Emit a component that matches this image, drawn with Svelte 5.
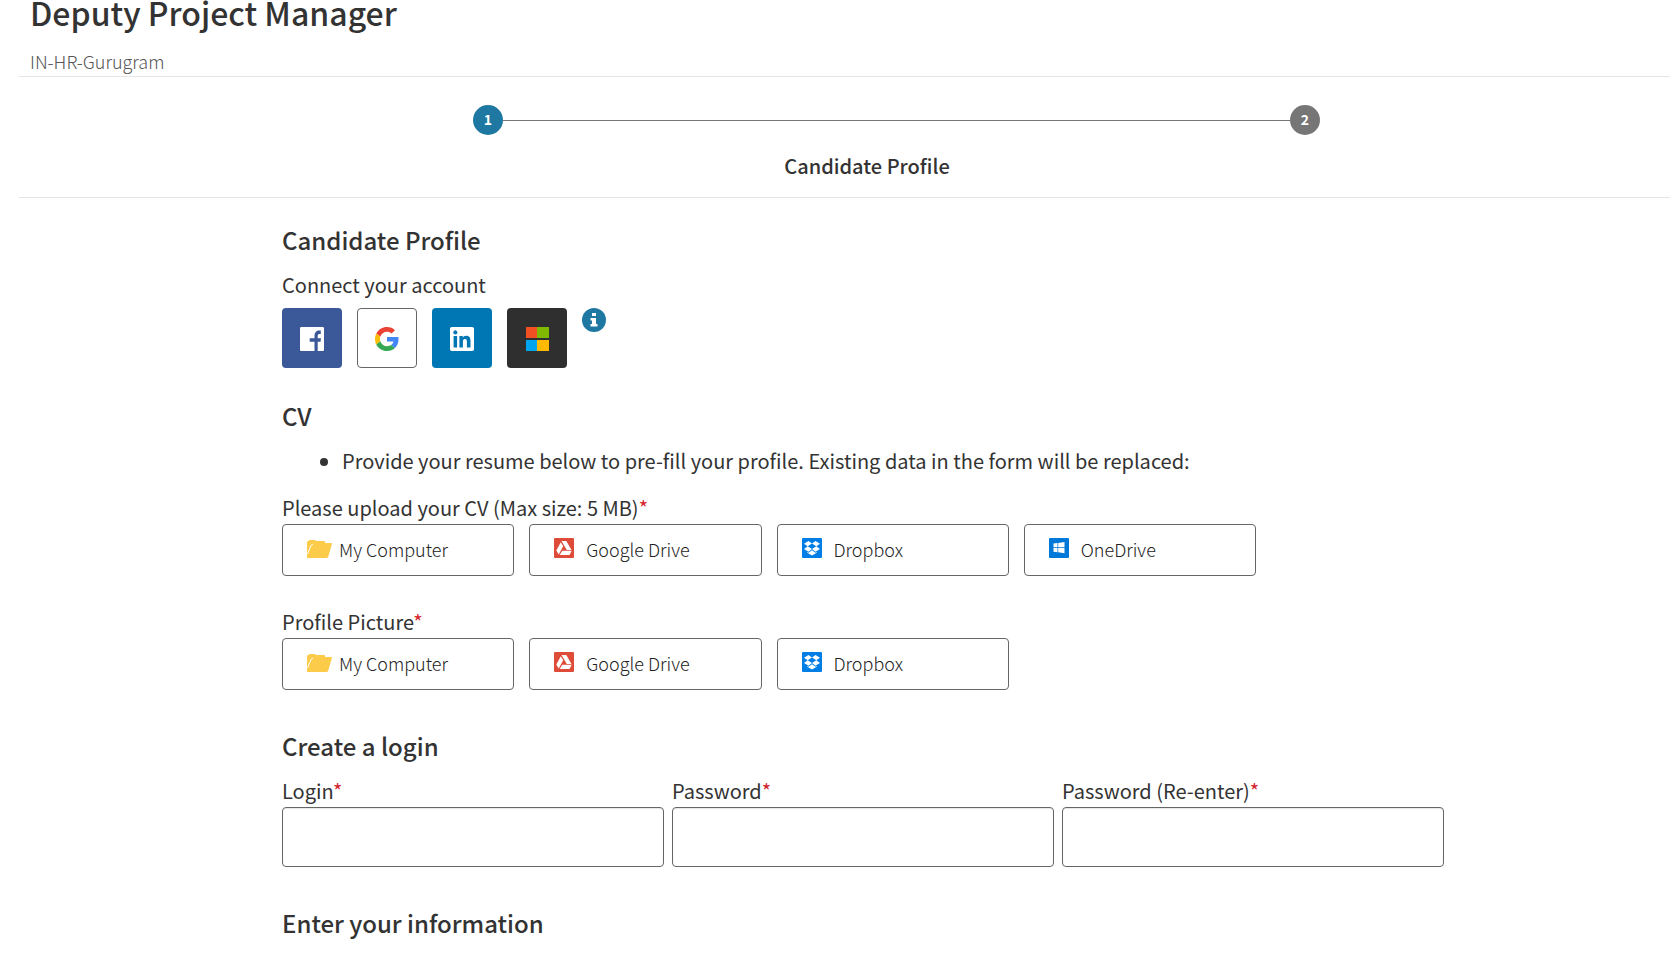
<script>
    const accounts = ["facebook", "google", "linkedin", "microsoft"];

    const uploads = [
        {
            id: "cv",
            label: "Please upload your CV (Max size: 5 MB)",
            sources: ["My Computer", "Google Drive", "Dropbox", "OneDrive"],
        },
        {
            id: "picture",
            label: "Profile Picture",
            sources: ["My Computer", "Google Drive", "Dropbox"],
        },
    ];

    const loginFields = [
        { id: "login", label: "Login", type: "text" },
        { id: "password", label: "Password", type: "password" },
        { id: "password2", label: "Password (Re-enter)", type: "password" },
    ];
</script>

{#snippet accountIcon(name)}
    <svg width="24" height="24" viewBox="0 0 24 24" aria-hidden="true">
        {#if name === "facebook"}
            <path
                fill="#fff"
                d="M22.7 0H1.3C.6 0 0 .6 0 1.3v21.4c0 .7.6 1.3 1.3 1.3h13.2v-9.3H9.7v-3.4h4.8V9.2c0-3.600 1.900-5.600 4.900-5.600h1.400v3.500h-1.300c-1.500 0-1.800.9-1.800 2.100v2.100h3.300l-.5 3.400h-2.800V24h5c.7 0 1.300-.6 1.300-1.300V1.300c0-.7-.6-1.300-1.300-1.300z"
            />
        {:else if name === "google"}
            <path fill="#ea4335" d="M12 4.800c1.800 0 3.400.6 4.600 1.800L20 3.200C17.900 1.200 15.200 0 12 0 7.300 0 3.300 2.700 1.300 6.600l4 3.100C6.200 6.900 8.900 4.800 12 4.800z" />
            <path fill="#4285f4" d="M23.500 12.300c0-.8-.1-1.600-.2-2.300H12v4.600h6.500c-.3 1.500-1.200 2.700-2.400 3.500l3.900 3c2.200-2.100 3.500-5.200 3.500-8.800z" />
            <path fill="#fbbc05" d="M5.300 14.300c-.2-.7-.4-1.500-.4-2.300s.1-1.600.4-2.300l-4-3.100C.5 8.200 0 10.100 0 12s.5 3.800 1.300 5.400z" />
            <path fill="#34a853" d="M12 24c3.200 0 6-1.100 8-2.900l-3.900-3c-1.100.7-2.500 1.200-4.100 1.200-3.100 0-5.800-2.100-6.700-5l-4 3.100C3.300 21.300 7.300 24 12 24z" />
        {:else if name === "linkedin"}
            <path
                fill="#fff"
                d="M22.200 0H1.800C.8 0 0 .8 0 1.700v20.600c0 .9.8 1.700 1.800 1.700h20.400c1 0 1.800-.8 1.800-1.700V1.700C24 .8 23.200 0 22.200 0zM7.100 20.500H3.600V9h3.500zM5.300 7.400c-1.100 0-2-.9-2-2s.9-2.100 2-2.100 2.100 1 2.100 2.100-.9 2-2.100 2zm15.200 13.100h-3.600v-5.600c0-1.300 0-3-1.900-3s-2.100 1.400-2.100 2.900v5.700H9.400V9h3.400v1.600c.5-.9 1.600-1.900 3.400-1.900 3.600 0 4.300 2.400 4.300 5.500z"
            />
        {:else}
            <path fill="#f25022" d="M1 0h11v11H1z" />
            <path fill="#7fba00" d="M12 0h12v11H12z" />
            <path fill="#00a4ef" d="M1 13h11v11H1z" />
            <path fill="#ffb900" d="M12 13h12v11H12z" />
        {/if}
    </svg>
{/snippet}

{#snippet sourceIcon(name)}
    <svg width="25" height="20" viewBox="0 0 25 20" aria-hidden="true">
        {#if name === "My Computer"}
            <path
                fill="#fdcb4a"
                d="M0 20V4.500C0 3.600.6 3 1.500 3L2.500 2H8l1 1h8c.7 0 1 .4 1 1v1h6.200c.6 0 .9.4.7 1l-3.600 12.600c-.3 1-.9 1.400-1.800 1.400z"
            />
            <path fill="none" stroke="#fff" d="M.5 16 4 7.500 6 6" />
        {:else if name === "Google Drive"}
            <rect width="20" height="20" rx="1" fill="#de4b39" />
            <path fill="#fff" d="M7.500 3h4.800l5.200 9h-4.700zM6.800 4.200l2.400 4.100L4.700 16.500l-2.400-4.100zM8.200 12.700h9.500L15.500 17H5.700z" />
        {:else if name === "Dropbox"}
            <rect width="20" height="20" rx="1" fill="#007ee5" />
            <path
                fill="#fff"
                d="M6.500 3 10 5.500 5.700 8.300 2 5.800zM13.500 3 18 5.800l-3.700 2.500L10 5.500zM2 11l3.700-2.700L10 11.100l-3.500 2.600zM10 11.100l4.300-2.800L18 11l-4.500 2.700zM10 12.200l3.500 2.500 1.300-.8v.8L10 17.500l-4.800-2.800v-.8l1.300.8z"
            />
        {:else}
            <rect width="20" height="20" rx="1" fill="#0078d7" />
            <path fill="#fff" d="M4.500 5.500 8.500 5v4.200h-4zM9.200 4.900 15.500 4v5.200H9.200zM4.500 10h4v4.200l-4-.5zM9.200 10h6.300v5.200l-6.300-.9z" />
        {/if}
    </svg>
{/snippet}

<header class="job-header">
    <h1>Deputy Project Manager</h1>
    <p>IN-HR-Gurugram</p>
</header>

<nav class="steps" aria-label="Progress">
    <div class="inner">
        <div class="track">
            <span class="step active">1</span>
            <span class="line"></span>
            <span class="step">2</span>
        </div>
        <p class="step-title">Candidate Profile</p>
    </div>
</nav>

<main>
    <form class="inner">
        <section>
            <h2>Candidate Profile</h2>
            <p>Connect your account</p>
            <div class="accounts">
                {#each accounts as account}
                    <button type="button" class="account {account}" aria-label={account}>
                        {@render accountIcon(account)}
                    </button>
                {/each}
                <svg class="info" width="24" height="24" viewBox="0 0 24 24" aria-hidden="true">
                    <circle cx="12" cy="12" r="12" fill="#1f78a1" />
                    <path fill="#fff" d="M10 5h4v3h-4zM8.500 10H14v6h1.500v2.500h-7V16H10v-3.500H8.500z" />
                </svg>
            </div>
        </section>

        <section class="cv">
            <h2>CV</h2>
            <ul>
                <li>Provide your resume below to pre-fill your profile. Existing data in the form will be replaced:</li>
            </ul>
            {#each uploads as upload}
                <div class="upload" role="group" aria-labelledby={upload.id}>
                    <p id={upload.id}>{upload.label}<span class="required">*</span></p>
                    <div class="sources">
                        {#each upload.sources as source}
                            <button type="button" class="source">
                                {@render sourceIcon(source)}
                                {source}
                            </button>
                        {/each}
                    </div>
                </div>
            {/each}
        </section>

        <section class="login">
            <h2>Create a login</h2>
            <div class="fields">
                {#each loginFields as field}
                    <div class="field">
                        <label for={field.id}>{field.label}<span class="required">*</span></label>
                        <input id={field.id} type={field.type} required />
                    </div>
                {/each}
            </div>
        </section>

        <section class="information">
            <h2>Enter your information</h2>
        </section>
    </form>
</main>

<style>
    :global(body) {
        background-color: #fff;
        color: #333;
        font-family: "Noto Sans CJK SC", "Open Sans", sans-serif;
        font-size: 20px;
        line-height: 28px;
    }
    h1,
    h2,
    p,
    ul {
        margin: 0;
    }
    .job-header {
        margin-left: 19px;
        padding: 0 11px 3px;
        border-bottom: 1px solid #e5e5e5;
    }
    h1 {
        margin-bottom: 25px;
        font-size: 32px;
        font-weight: 500;
        line-height: 24px;
    }
    .job-header p {
        color: #555;
        font-size: 18px;
        font-weight: 300;
        line-height: 24px;
    }
    .steps {
        margin-left: 19px;
        padding: 28px 0 17px 45px;
        border-bottom: 1px solid #e5e5e5;
    }
    .inner {
        max-width: 1170px;
        margin: 0 auto;
    }
    .track {
        display: flex;
        align-items: center;
        margin-bottom: 17px;
        padding: 0 132px 0 191px;
    }
    .step {
        width: 30px;
        padding-bottom: 2px;
        border-radius: 50%;
        background-color: #767676;
        color: #fff;
        font-size: 14px;
        font-weight: 700;
        line-height: 28px;
        text-align: center;
    }
    .step.active {
        background-color: #1f78a1;
    }
    .line {
        flex: 1;
        height: 1px;
        background-color: #767676;
    }
    .step-title {
        font-weight: 500;
        text-align: center;
    }
    main {
        margin-left: 19px;
        padding: 26px 0 0 45px;
    }
    h2 {
        margin-bottom: 15px;
        font-size: 24px;
        font-weight: 500;
        line-height: 32px;
    }
    .accounts {
        display: flex;
        gap: 15px;
        margin-top: 9px;
    }
    .account {
        display: flex;
        align-items: center;
        justify-content: center;
        width: 60px;
        height: 60px;
        padding: 2px 0 0;
        border: 0;
        border-radius: 4px;
    }
    .facebook {
        background-color: #3b5998;
    }
    .google {
        border: 1px solid #666;
        background-color: #fff;
    }
    .linkedin {
        background-color: #0077b5;
    }
    .microsoft {
        background-color: #2f2f2f;
    }
    .cv,
    .upload + .upload {
        margin-top: 32px;
    }
    ul {
        margin-bottom: 19px;
        padding-left: 60px;
    }
    .required {
        color: #d3222a;
    }
    .sources {
        display: grid;
        grid-template-columns: repeat(4, 1fr);
        gap: 15px;
        max-width: 974px;
        margin-top: 2px;
    }
    .source {
        display: flex;
        align-items: center;
        gap: 7px;
        height: 52px;
        padding: 0 24px 2px;
        border: 1px solid #666;
        border-radius: 4px;
        background-color: #fff;
        color: #222;
        font-family: inherit;
        font-size: 18px;
        font-weight: 300;
        line-height: 24px;
    }
    .source svg {
        margin-bottom: 2px;
    }
    .login,
    .information {
        margin-top: 40px;
    }
    .fields {
        display: grid;
        grid-template-columns: repeat(3, 1fr);
        gap: 8px;
        max-width: 1162px;
    }
    .field {
        display: flex;
        flex-direction: column;
        gap: 2px;
    }
    input {
        height: 60px;
        box-sizing: border-box;
        padding: 0 12px;
        border: 1px solid #666;
        border-radius: 4px;
        background-color: #fff;
        box-shadow: inset 0 1px 1px rgba(0, 0, 0, 0.1);
        color: #333;
        font-family: inherit;
        font-size: 20px;
    }
</style>
